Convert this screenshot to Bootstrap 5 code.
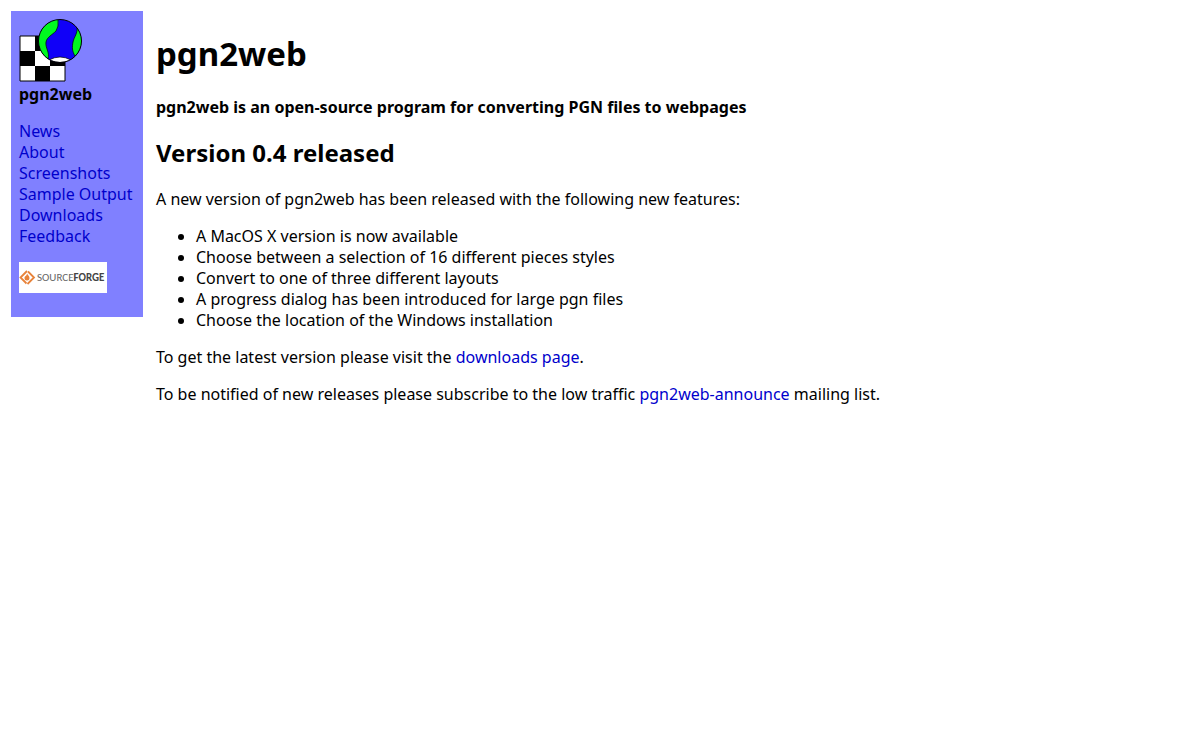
<!DOCTYPE html>
<html lang="en">
<head>
<meta charset="utf-8">
<meta name="viewport" content="width=device-width, initial-scale=1">
<title>pgn2web</title>
<link href="https://cdn.jsdelivr.net/npm/bootstrap@5.3.0/dist/css/bootstrap.min.css" rel="stylesheet">
<style>
body { font-family: "Noto Sans", "Open Sans", sans-serif; font-size: 16px; line-height: 21px; color: #000; background: #fff; padding: 11px; }
a { color: #0000cc; text-decoration: none; }
p, ul { margin-bottom: 16px; }
.page { gap: 13px; }
.sidebar { background: #8080ff; padding: 8px; min-width: 132px; }
.site-title, .tagline, .news-title, .brand { font-weight: 700; }
.site-title { font-size: 33px; line-height: 44px; margin: 21px 0; }
.tagline { font-size: 16px; line-height: 21px; margin: 0 0 18px; }
.news-title { font-size: 24px; line-height: 33px; margin: 0 0 20px; }
.brand { margin: 0 0 16px; }
.features { padding-left: 40px; }
.host-logo { margin: 15px 0 16px; }
</style>
</head>
<body>
<div class="page d-flex align-items-start">
  <aside class="sidebar flex-shrink-0">
    <svg class="d-block" width="65" height="65" viewBox="0 0 65 65" role="img" aria-label="pgn2web logo">
      <path d="M1 17h45v45H1z" fill="#fff" stroke="#000"/>
      <path d="M16 17h15v15H16zM1 32h15v15H1zM31 32h15v15H31zM16 47h15v15H16z"/>
      <clipPath id="globe"><circle cx="41" cy="22" r="21.5"/></clipPath>
      <g clip-path="url(#globe)">
        <path d="M19 0h44v44H19z" fill="#1000f8"/>
        <path d="M39 0q1 8-2 12c-4 4-9 6-10 11-1 6 4 10 2 17L17 40V0z" fill="#00f820" stroke="#000" stroke-width=".7"/>
        <path d="M58 8c1 6-3 10-4 15-1 5-1 9 2 14l8-4V8z" fill="#00f820" stroke="#000" stroke-width=".7"/>
        <path d="M30 41q11-6 22 0-11 5-22 0z" fill="#fff" stroke="#000" stroke-width=".7"/>
      </g>
      <circle cx="41" cy="22" r="21.5" fill="none" stroke="#000"/>
    </svg>
    <p class="brand">pgn2web</p>
    <nav class="d-flex flex-column" aria-label="Main">
      <a href="#news">News</a>
      <a href="#about">About</a>
      <a href="#screenshots">Screenshots</a>
      <a href="#output">Sample Output</a>
      <a href="#downloads">Downloads</a>
      <a href="#feedback">Feedback</a>
    </nav>
    <p class="host-logo"><a href="#sourceforge" class="d-block">
      <svg class="d-block" width="88" height="31" viewBox="0 0 88 31" role="img" aria-label="SourceForge">
        <path d="M0 0h88v31H0z" fill="#fff"/>
        <path d="M7.500 21.500L1.500 15.500 8 9M9 9.500l6 6L8.500 22" fill="none" stroke="#e8833a" stroke-width="1.800"/>
        <path d="M8 11.500c1 2 2.500 2.500 2.500 4.500a2.500 2.500 0 0 1-5 0C5.500 14 8 14 8 11.500z" fill="#e8833a"/>
        <text x="18" y="19" font-family="Carlito, Lato, sans-serif" font-size="11" fill="#666">SOURCE<tspan font-weight="700" fill="#444">FORGE</tspan></text>
      </svg></a></p>
  </aside>
  <main>
    <h1 class="site-title">pgn2web</h1>
    <h2 class="tagline">pgn2web is an open-source program for converting PGN files to webpages</h2>
    <h2 class="news-title">Version 0.4 released</h2>
    <p>A new version of pgn2web has been released with the following new features:</p>
    <ul class="features">
      <li>A MacOS X version is now available</li>
      <li>Choose between a selection of 16 different pieces styles</li>
      <li>Convert to one of three different layouts</li>
      <li>A progress dialog has been introduced for large pgn files</li>
      <li>Choose the location of the Windows installation</li>
    </ul>
    <p>To get the latest version please visit the <a href="#downloads">downloads page</a>.</p>
    <p>To be notified of new releases please subscribe to the low traffic <a href="#announce">pgn2web-announce</a> mailing list.</p>
  </main>
</div>
<script src="https://cdn.jsdelivr.net/npm/bootstrap@5.3.0/dist/js/bootstrap.bundle.min.js"></script>
</body>
</html>
